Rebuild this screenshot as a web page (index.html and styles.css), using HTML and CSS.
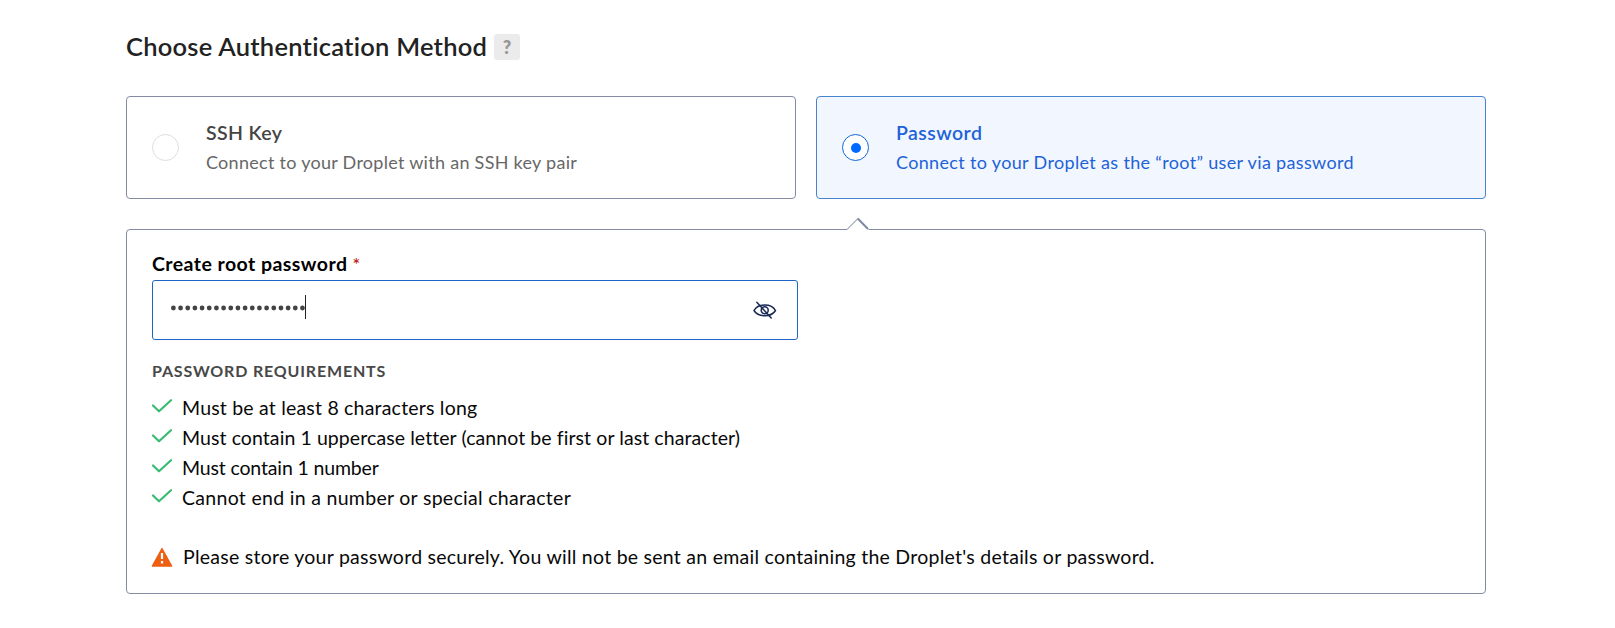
FILE: index.html
```html
<!DOCTYPE html>
<html lang="en">
<head>
<meta charset="utf-8">
<title>Choose Authentication Method</title>
<link rel="stylesheet" href="styles.css">
</head>
<body>
<main class="auth">
  <header class="heading">
    <h2 class="title">Choose Authentication Method</h2>
    <span class="help">?</span>
  </header>
  <div class="options">
    <div class="option">
      <span class="radio"></span>
      <div class="option-text">
        <div class="option-name"><span class="ssh-name">SSH Key</span></div>
        <div class="option-desc"><span class="ssh-desc">Connect to your Droplet with an SSH key pair</span></div>
      </div>
    </div>
    <div class="option selected">
      <span class="radio"></span>
      <div class="option-text">
        <div class="option-name"><span class="pw-name">Password</span></div>
        <div class="option-desc"><span class="pw-desc">Connect to your Droplet as the “root” user via password</span></div>
      </div>
    </div>
  </div>
  <section class="panel">
    <svg class="notch" width="24" height="13" viewBox="0 0 24 13"><path d="M1 13 12 1.500 23 13z" fill="#fff"/><path d="M1.500 12 12 1.500" stroke="#a9afbf" stroke-width="1.100" fill="none"/><path d="M11.700 1.500 22 12" stroke="#8089a3" stroke-width="2" fill="none"/></svg>
    <div class="label"><span class="label-text">Create root password</span><span class="star">*</span></div>
    <div class="field">
      <svg class="dots" width="134" height="6" viewBox="0 0 134 6"><path d="M2.400 3H134" stroke="#444" stroke-width="4.800" stroke-linecap="round" stroke-dasharray="0 7.170" fill="none"/></svg><span class="caret"></span>
      <svg class="eye" width="24" height="18" viewBox="0 0 24 18" fill="none" stroke="#1b2a55" stroke-width="1.500" stroke-linecap="round"><path d="M1 9.500C5 2.100 18.500 2.100 22.500 9.500 18.500 16.400 5 16.400 1 9.500z"/><circle cx="11.700" cy="9.300" r="3.500"/><path d="M3.800 1.300 18.200 17"/></svg>
    </div>
    <h3 class="req-title">PASSWORD REQUIREMENTS</h3>
    <ul class="reqs">
      <li><svg class="check" width="20" height="14" viewBox="0 0 20 14"><path d="M1 6.500 7 12.300 19 1.200"/></svg><span class="r1">Must be at least 8 characters long</span></li>
      <li><svg class="check" width="20" height="14" viewBox="0 0 20 14"><path d="M1 6.500 7 12.300 19 1.200"/></svg><span class="r2">Must contain 1 uppercase letter (cannot be first or last character)</span></li>
      <li><svg class="check" width="20" height="14" viewBox="0 0 20 14"><path d="M1 6.500 7 12.300 19 1.200"/></svg><span class="r3">Must contain 1 number</span></li>
      <li><svg class="check" width="20" height="14" viewBox="0 0 20 14"><path d="M1 6.500 7 12.300 19 1.200"/></svg><span class="r4">Cannot end in a number or special character</span></li>
    </ul>
    <div class="warning">
      <svg class="warn-icon" width="21" height="20" viewBox="0 0 21 20"><path d="M10 1.500 19.700 19H.300z" fill="#ed5f13" stroke="#ed5f13" stroke-width="1.300" stroke-linejoin="round"/><path d="M10 6v6M10 14v2.400" stroke="#fff" stroke-width="2.200"/></svg>
      <span class="warn-text">Please store your password securely. You will not be sent an email containing the Droplet's details or password.</span>
    </div>
  </section>
</main>
</body>
</html>
```

FILE: styles.css
```css
* { box-sizing: border-box; }
body { margin: 0; background: #fff; color: #080808; font-family: Lato, "Liberation Sans", sans-serif; font-size: 20px; }
.auth { width: 1360px; margin-left: 126px; padding-top: 31px; }
.heading { display: flex; align-items: center; gap: 8px; height: 32px; margin-bottom: 33px; }
.title { margin: 0; width: 360px; white-space: nowrap; font-size: 25.500px; line-height: 30px; padding-bottom: 3px; font-weight: 600; letter-spacing: 0.250px; color: #222; }
.help { width: 26px; height: 26px; border-radius: 3px; background: #ebebeb; color: #999; font-size: 18px; font-weight: 800; line-height: 26px; text-align: center; }
.options { display: grid; grid-template-columns: 1fr 1fr; gap: 20px; margin-bottom: 30px; }
.option { display: flex; align-items: center; height: 103px; padding-left: 25px; gap: 27px; border: 1px solid #848ba5; border-radius: 4px; }
.radio { display: flex; width: 27px; height: 27px; border: 1px solid #dedede; border-radius: 50%; background: #fff; align-items: center; justify-content: center; }
.option-text { white-space: nowrap; }
.option-name { font-size: 19.500px; line-height: 30px; font-weight: 600; color: #444; }
.option-desc { font-size: 18px; line-height: 28px; padding-bottom: 2px; color: #676767; }
.ssh-name { letter-spacing: 0.350px; }
.ssh-desc { letter-spacing: 0.280px; }
.pw-name { letter-spacing: 0.450px; }
.pw-desc { letter-spacing: 0.340px; }
.selected { background: #f2f7ff; border-color: #4685cd; }
.selected .radio { border-color: #1266d6; }
.selected .radio::after { content: ""; width: 10px; height: 10px; border-radius: 50%; background: #0069ff; }
.selected .option-name, .selected .option-desc { color: #1e62d8; }
.panel { position: relative; height: 365px; padding: 20px 25px; border: 1px solid #848ba5; border-radius: 4px; white-space: nowrap; }
.notch { position: absolute; left: 719px; top: -13px; }
.label { display: flex; gap: 5px; height: 30px; line-height: 28px; font-size: 19.500px; font-weight: 700; letter-spacing: 0.450px; color: #000; }
.star { color: #c0271c; font-size: 18px; font-weight: 600; line-height: 28px; }
.field { display: flex; align-items: center; width: 646px; height: 60px; padding: 0 20px 0 18px; border: 1px solid #1f66c4; border-radius: 3px; }
.dots { margin-bottom: 4px; }
.caret { width: 1px; height: 24px; margin-bottom: 6px; background: #222; }
.eye { margin-left: auto; }
.req-title { margin: 19px 0 10px; font-size: 16px; line-height: 24px; font-weight: 700; letter-spacing: 0.820px; color: #484848; }
.reqs { margin: 0; padding: 0; list-style: none; font-size: 19.500px; line-height: 30px; }
.reqs li { display: flex; align-items: center; gap: 10px; }
.r1 { letter-spacing: 0.200px; }
.r2 { letter-spacing: 0.080px; }
.r3 { letter-spacing: -0.150px; }
.r4 { letter-spacing: 0.300px; }
.check { margin-bottom: 4px; fill: none; stroke: #38bb73; stroke-width: 2.200; stroke-linecap: round; stroke-linejoin: round; }
.warning { display: flex; align-items: center; gap: 10px; margin-top: 29px; font-size: 19.500px; line-height: 30px; letter-spacing: 0.255px; }
.warn-icon { overflow: visible; }
```
